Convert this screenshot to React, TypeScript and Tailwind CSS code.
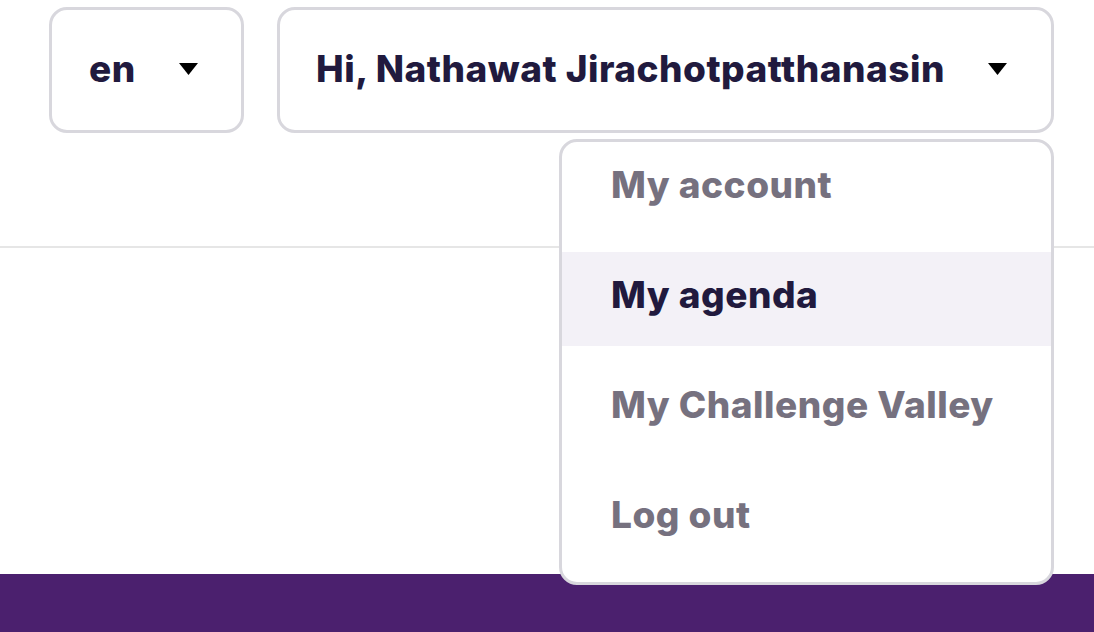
import React from "react";

const Caret = () => (
  <svg width="19" height="12" viewBox="0 0 19 12" className="shrink-0">
    <path d="M0 0 H19 L9.5 12 Z" fill="#000" />
  </svg>
);

const menu = [
  { label: "My account", active: false },
  { label: "My agenda", active: true },
  { label: "My Challenge Valley", active: false },
  { label: "Log out", active: false },
];

const App = () => {
  return (
    <div
      className="relative w-[1094px] h-[632px] overflow-hidden bg-white"
      style={{ fontFamily: "Inter, 'Open Sans', sans-serif" }}
    >
      <header className="h-[248px] border-b-2 border-[#e6e6e6]">
        <div className="flex justify-end gap-[33px] pt-[7px] pr-[40px]">
          <button className="flex h-[126px] w-[195px] items-center justify-between rounded-[18px] border-[3px] border-[#d8d7dd] bg-white pl-[37px] pr-[43px] pb-[3px]">
            <span className="text-[37px] font-extrabold text-[#211a3e] tracking-[0.5px]">en</span>
            <Caret />
          </button>
          <button className="flex h-[126px] w-[777px] items-center justify-between rounded-[18px] border-[3px] border-[#d8d7dd] bg-white pl-[36px] pr-[44px] pb-[3px]">
            <span className="text-[37px] font-extrabold text-[#211a3e] tracking-[0.5px]">
              Hi, Nathawat Jirachotpatthanasin
            </span>
            <Caret />
          </button>
        </div>
      </header>

      <main className="h-[326px]" />

      <footer className="h-[58px] bg-[#4b206e]" />

      <div className="absolute top-[139px] right-[40px] w-[495px] rounded-[18px] border-[3px] border-[#d8d7dd] bg-white pb-[16px]">
        <ul className="flex flex-col gap-[16px]">
          {menu.map((item) => (
            <li
              key={item.label}
              className={
                item.active
                  ? "flex h-[94px] items-center bg-[#f3f1f7] pl-[49px] pb-[8px] text-[37px] font-extrabold text-[#211a3e] tracking-[0.5px]"
                  : "flex h-[94px] items-center pl-[49px] pb-[8px] text-[37px] font-extrabold text-[#76717f] tracking-[0.5px]"
              }
            >
              {item.label}
            </li>
          ))}
        </ul>
      </div>
    </div>
  );
};

export default App;
